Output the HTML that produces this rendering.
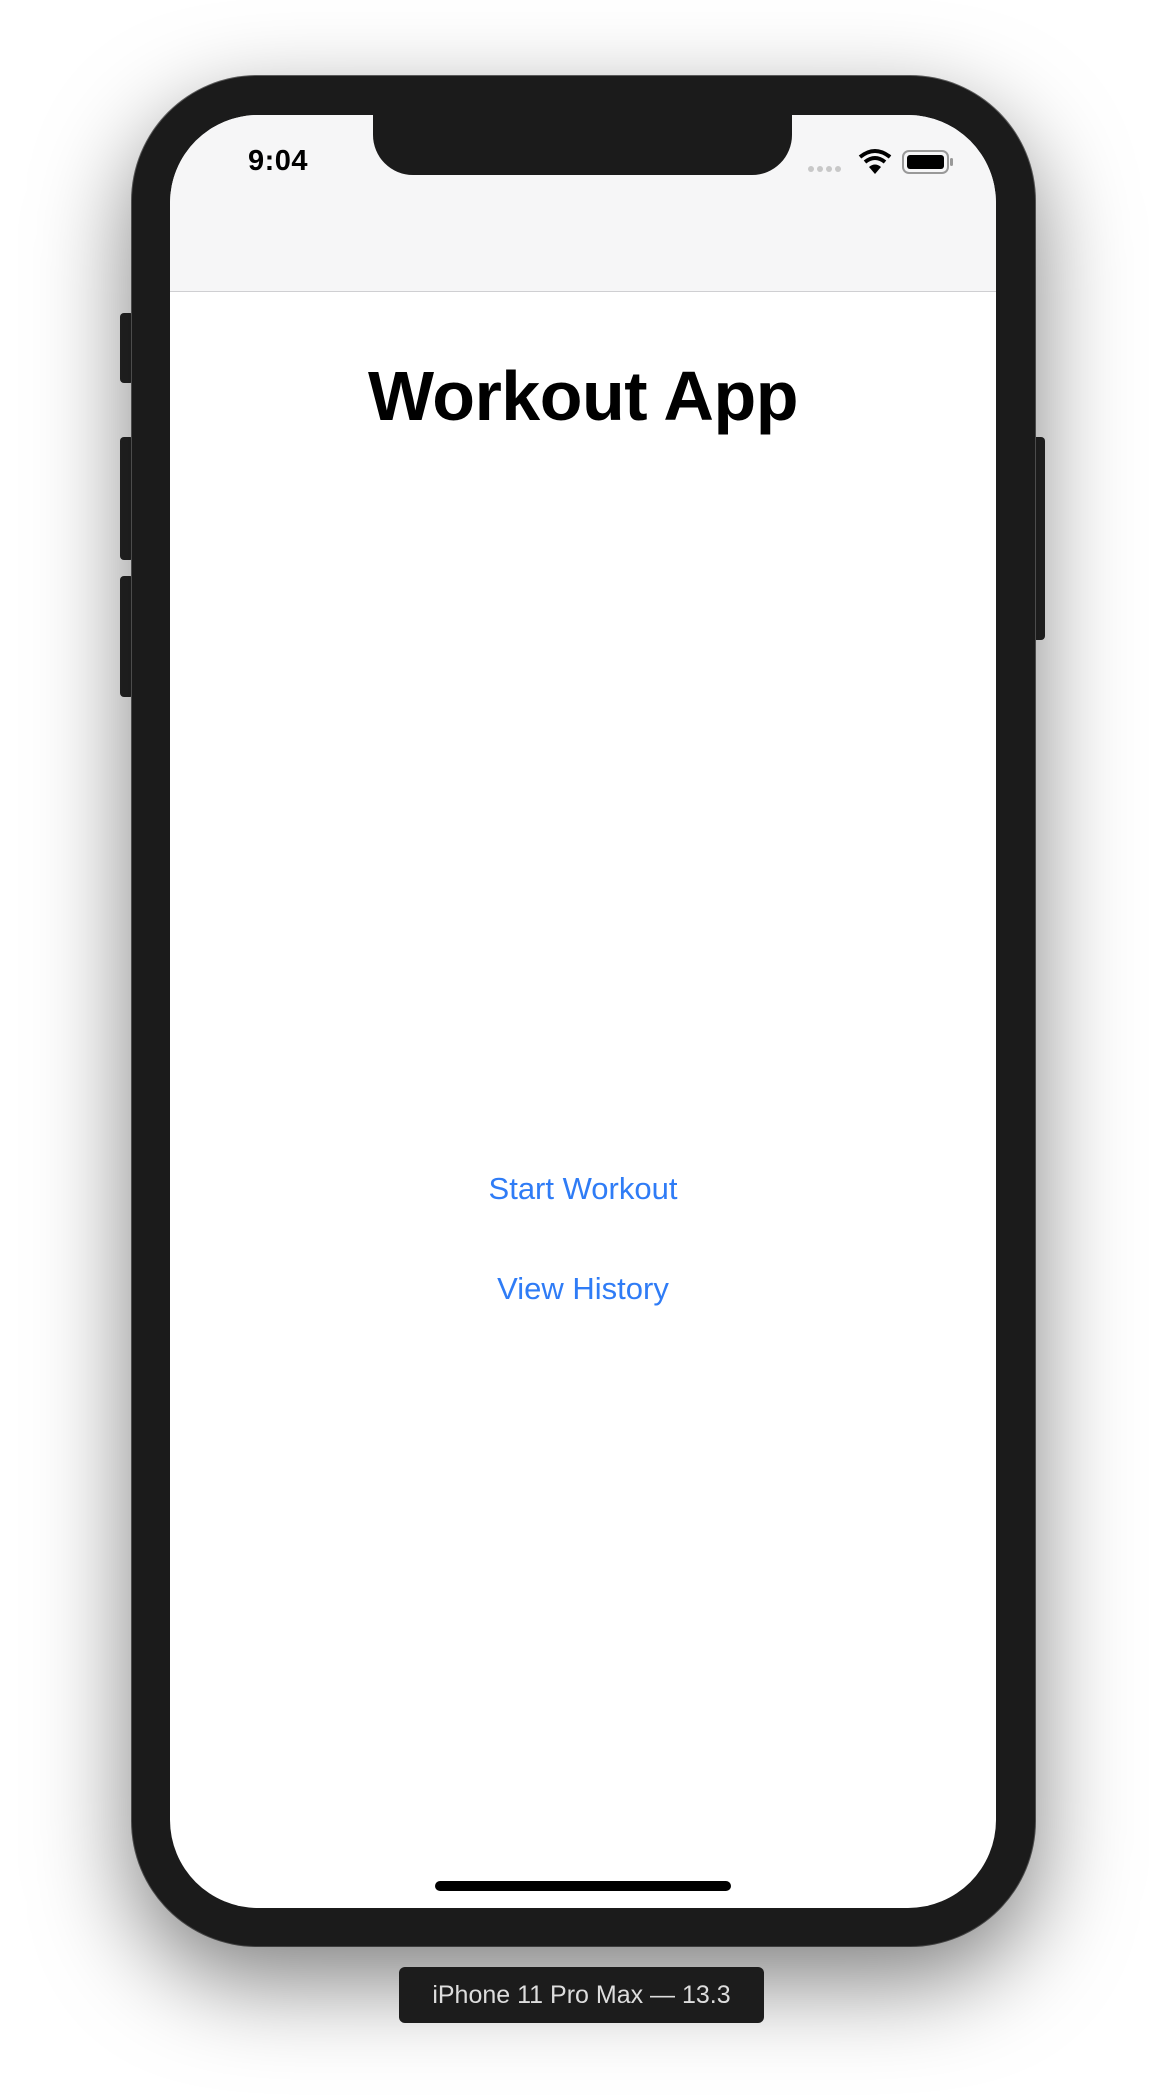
<!DOCTYPE html>
<html><head><meta charset="utf-8"><style>
html,body{margin:0;padding:0;width:1168px;height:2096px;background:#fff;overflow:hidden;position:relative;font-family:"Liberation Sans",sans-serif}
.abs{position:absolute}
.phone{left:132px;top:76px;width:903px;height:1870px;background:#1b1b1b;border-radius:125px;box-shadow:0 35px 95px rgba(0,0,0,.5),0 0 0 1px #666}
.screen{left:170px;top:115px;width:826px;height:1793px;background:#fff;border-radius:88px;overflow:hidden}
.nav{left:0;top:0;width:826px;height:176px;background:#f6f6f7;border-bottom:1px solid #cfcfd2}
.notch{left:203px;top:0;width:419px;height:60px;background:#1b1b1b;border-radius:0 0 40px 40px}
.btn{background:#262626;border-radius:4px}
</style></head><body>
<div class="abs btn" style="left:120px;top:313px;width:14px;height:70px"></div>
<div class="abs btn" style="left:120px;top:437px;width:14px;height:123px"></div>
<div class="abs btn" style="left:120px;top:576px;width:14px;height:121px"></div>
<div class="abs btn" style="left:1032px;top:437px;width:13px;height:203px"></div>
<div class="abs phone"></div>
<div class="abs screen">
  <div class="abs nav"></div>
  <div class="abs notch"></div>
  <div class="abs" style="left:78px;top:30px;font-size:29px;font-weight:600;color:#000;letter-spacing:.5px">9:04</div>
  <svg class="abs" style="left:635px;top:30px" width="160" height="32" viewBox="0 0 160 32">
    <circle cx="6" cy="24" r="3" fill="#c8c8c8"/><circle cx="15" cy="24" r="3" fill="#c8c8c8"/><circle cx="24" cy="24" r="3" fill="#c8c8c8"/><circle cx="33" cy="24" r="3" fill="#c8c8c8"/>
    <path d="M55 12 Q70 0 85 12" stroke="#000" stroke-width="4" fill="none"/>
    <path d="M60 17 Q70 9 80 17" stroke="#000" stroke-width="4" fill="none"/>
    <path d="M64 22 Q70 17 76 22 L70 29 Z" fill="#000"/>
    <rect x="98" y="6" width="45" height="22" rx="6" fill="none" stroke="#999" stroke-width="2"/>
    <rect x="102" y="10" width="37" height="14" rx="3" fill="#000"/>
    <rect x="145" y="13" width="3" height="8" rx="1.5" fill="#999"/>
  </svg>
  <div class="abs" style="left:0;width:826px;top:241px;text-align:center;font-size:70px;font-weight:700;color:#000;letter-spacing:-.5px">Workout App</div>
  <div class="abs" style="left:0;width:826px;top:1056px;text-align:center;font-size:31px;color:#2f7cf6">Start Workout</div>
  <div class="abs" style="left:0;width:826px;top:1156px;text-align:center;font-size:31px;color:#2f7cf6">View History</div>
  <div class="abs" style="left:265px;top:1766px;width:296px;height:10px;border-radius:5px;background:#000"></div>
</div>
<div class="abs" style="left:399px;top:1967px;width:365px;height:56px;background:#1c1c1c;border-radius:6px;color:#ddd;font-size:25px;line-height:56px;text-align:center">iPhone 11 Pro Max — 13.3</div>
</body></html>
